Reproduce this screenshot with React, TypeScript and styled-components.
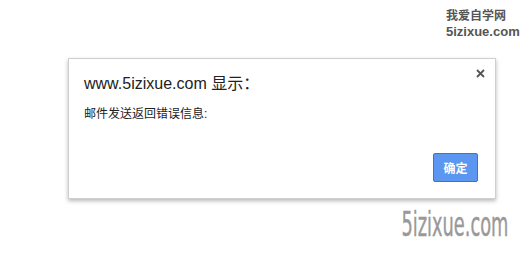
import React from 'react';
import styled, { createGlobalStyle } from 'styled-components';

const GlobalStyle = createGlobalStyle`
	html, body {
		margin: 0;
		padding: 0;
		background: #ffffff;
	}
	body {
		font-family: "Liberation Sans", Arial, "Noto Sans CJK SC", sans-serif;
	}
`

const Page = styled.div`
	width: 529px;
	height: 255px;
	overflow: hidden;
	display: flex;
	flex-direction: column;
`

const TopMark = styled.div`
	align-self: flex-end;
	margin: 9px 9px 0 0;
	width: 74px;
	color: #555555;
	font-weight: 700;
	font-family: "Liberation Sans", "Noto Sans CJK SC", sans-serif;
`

const MarkLine = styled.div<{ size: number }>`
	font-size: ${p => p.size}px;
	line-height: 15px;
	white-space: nowrap;
`

const Dialog = styled.div`
	position: relative;
	box-sizing: border-box;
	margin: 19px 0 0 68px;
	width: 428px;
	height: 141px;
	padding: 15px 17px 16px 15px;
	background: #ffffff;
	border: 1px solid #cfcfcf;
	box-shadow: 0 2px 4px rgba(0, 0, 0, 0.28);
	display: flex;
	flex-direction: column;
`

const Title = styled.div`
	font-size: 16px;
	line-height: 20px;
	color: #222222;
	font-family: "Liberation Sans", "Noto Sans CJK SC", sans-serif;
`

const Message = styled.div`
	margin-top: 12px;
	font-size: 12px;
	line-height: 16px;
	color: #222222;
	font-family: "Liberation Sans", "Noto Sans CJK SC", sans-serif;
`

const Close = styled.button`
	position: absolute;
	top: 8px;
	right: 9px;
	width: 12px;
	height: 12px;
	padding: 0;
	border: none;
	background: transparent;
	display: flex;
	align-items: center;
	justify-content: center;
`

const Footer = styled.div`
	margin-top: auto;
	display: flex;
	justify-content: flex-end;
`

const OkButton = styled.button`
	width: 45px;
	height: 29px;
	padding: 0;
	background: #5b96f0;
	border: 1px solid #3d74c9;
	border-radius: 2px;
	color: #ffffff;
	font-size: 12px;
	font-weight: 700;
	font-family: "Liberation Sans", "Noto Sans CJK SC", sans-serif;
`

const BottomMark = styled.div`
	align-self: flex-end;
	margin: 9px 21px 0 0;
	color: #999999;
	font-size: 33px;
	line-height: 34px;
	font-family: "Liberation Sans Narrow", "DejaVu Sans Condensed", sans-serif;
	-webkit-text-stroke: 0.4px #999999;
	transform: scaleX(0.6);
	transform-origin: right center;
	white-space: nowrap;
`

export default function App() {
	return (
		<>
			<GlobalStyle />
			<Page>
				<TopMark>
					<MarkLine size={12}>我爱自学网</MarkLine>
					<MarkLine size={13}>5izixue.com</MarkLine>
				</TopMark>
				<Dialog>
					<Close aria-label="close">
						<svg width="9" height="9" viewBox="0 0 9 9">
							<path d="M1 1 L8 8 M8 1 L1 8" stroke="#555" strokeWidth="1.8" />
						</svg>
					</Close>
					<Title>www.5izixue.com 显示：</Title>
					<Message>邮件发送返回错误信息:</Message>
					<Footer>
						<OkButton>确定</OkButton>
					</Footer>
				</Dialog>
				<BottomMark>5izixue.com</BottomMark>
			</Page>
		</>
	);
}
